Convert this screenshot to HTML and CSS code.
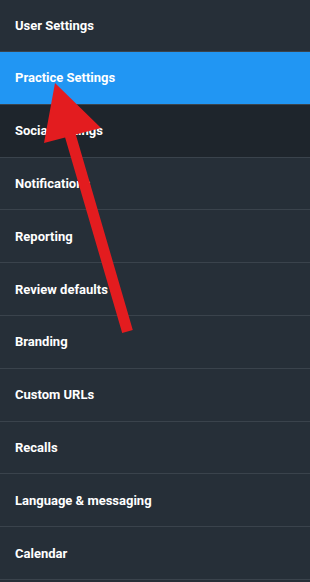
FILE: index.html
```html
<!DOCTYPE html>
<html lang="en">
<head>
    <meta charset="UTF-8">
    <meta name="viewport" content="width=device-width, initial-scale=1.0">
    <title>Settings</title>
    <link rel="stylesheet" href="styles.css">
</head>
<body>
    <nav class="sidebar">
        <a class="menu-item" href="#">User Settings</a>
        <a class="menu-item active" href="#">Practice Settings</a>
        <a class="menu-item hover" href="#">Social Settings</a>
        <a class="menu-item" href="#">Notifications</a>
        <a class="menu-item" href="#">Reporting</a>
        <a class="menu-item" href="#">Review defaults</a>
        <a class="menu-item" href="#">Branding</a>
        <a class="menu-item" href="#">Custom URLs</a>
        <a class="menu-item" href="#">Recalls</a>
        <a class="menu-item" href="#">Language &amp; messaging</a>
        <a class="menu-item" href="#">Calendar</a>
    </nav>

    <!-- Annotation arrow pointing at the active item -->
    <svg class="arrow" width="310" height="582" viewBox="0 0 310 582">
        <polygon points="55,83 101,128 75.8,134.6 132.8,330 122.2,333 65.1,137.5 44,143" fill="#e31c1f"/>
    </svg>
</body>
</html>
```

FILE: styles.css
```css
body {
    margin: 0;
    background-color: #262f38;
    font-family: Roboto, "Liberation Sans", sans-serif;
    position: relative;
    height: 582px;
    overflow: hidden;
}

.sidebar {
    display: flex;
    flex-direction: column;
}

.menu-item {
    display: flex;
    align-items: center;
    height: 51.8px;
    padding: 0 15px;
    border-bottom: 1px solid #3a434c;
    color: #ffffff;
    font-size: 13px;
    font-weight: 700;
    text-decoration: none;
    flex-shrink: 0;
}

.menu-item:first-child {
    height: 51px;
}

.menu-item.active {
    background-color: #2196f3;
}

.menu-item.hover {
    background-color: #1e252c;
}

.arrow {
    position: absolute;
    top: 0;
    left: 0;
    pointer-events: none;
}
```
